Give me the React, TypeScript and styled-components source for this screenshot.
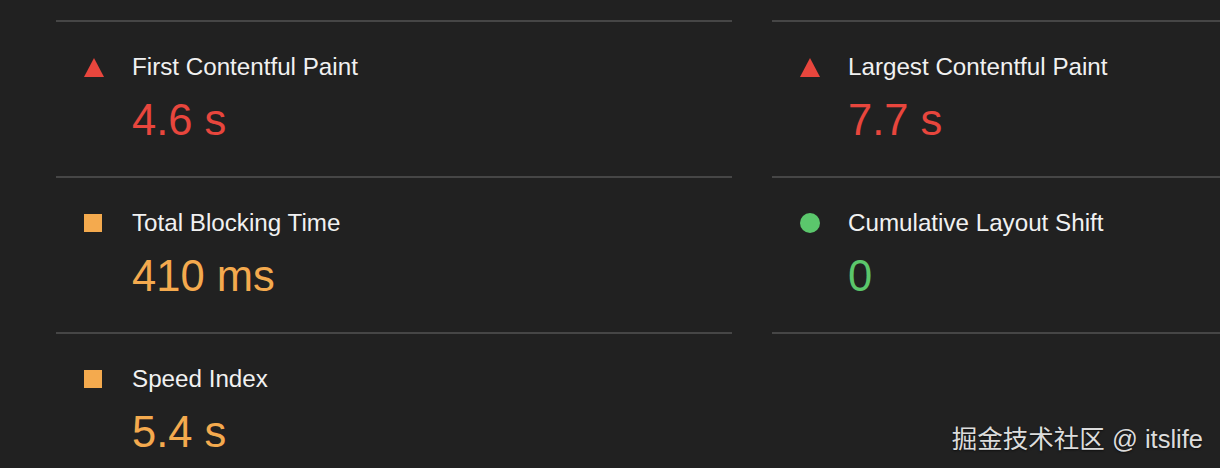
import React from 'react';
import styled, { createGlobalStyle } from 'styled-components';

const GlobalStyle = createGlobalStyle`
  html, body {
    margin: 0;
    padding: 0;
    background: #212121;
    overflow: hidden;
  }
`;

type Level = 'fail' | 'average' | 'pass';

const levelColor: Record<Level, string> = {
  fail: '#e8463d',
  average: '#f4aa4e',
  pass: '#5bc76c',
};

const Page = styled.div`
  position: relative;
  width: 1220px;
  height: 468px;
  box-sizing: border-box;
  padding: 20px 0 0 56px;
  background: #212121;
  font-family: 'Liberation Sans', Arial, Helvetica, sans-serif;
  overflow: hidden;
`;

const Grid = styled.div`
  display: grid;
  grid-template-columns: 676px 448px;
  column-gap: 40px;
  align-items: start;
`;

const Column = styled.div<{ $closed?: boolean }>`
  display: flex;
  flex-direction: column;
  border-bottom: ${p => (p.$closed ? '2px solid #464646' : 'none')};
`;

const Metric = styled.div`
  display: grid;
  grid-template-columns: 48px 1fr;
  grid-template-rows: 28px 50px;
  row-gap: 14px;
  height: 156px;
  box-sizing: border-box;
  padding: 31px 0 0 28px;
  border-top: 2px solid #464646;
`;

const IconCell = styled.div`
  display: flex;
  align-items: center;
`;

const Square = styled.div<{ $level: Level }>`
  width: 18px;
  height: 18px;
  background: ${p => levelColor[p.$level]};
`;

const Circle = styled.div<{ $level: Level }>`
  width: 20px;
  height: 20px;
  border-radius: 50%;
  background: ${p => levelColor[p.$level]};
`;

const Label = styled.div`
  font-size: 24.2px;
  line-height: 28px;
  color: #f1f1f1;
  white-space: nowrap;
`;

const Value = styled.div<{ $level: Level }>`
  grid-column: 2;
  font-size: 43.5px;
  line-height: 50px;
  color: ${p => levelColor[p.$level]};
  white-space: nowrap;
`;

const Watermark = styled.div`
  position: absolute;
  right: 17px;
  bottom: 14px;
  font-family: 'Liberation Sans', 'Noto Sans CJK SC', sans-serif;
  font-size: 25.5px;
  line-height: 30px;
  color: #dcdcdc;
  text-shadow: 0 1px 2px rgba(0, 0, 0, 0.6);
  white-space: nowrap;
`;

const Icon: React.FC<{ level: Level }> = ({ level }) => {
  if (level === 'fail') {
    return (
      <svg width="20" height="19" viewBox="0 0 20 19">
        <polygon points="10,0 20,19 0,19" fill={levelColor.fail} />
      </svg>
    );
  }
  if (level === 'average') return <Square $level={level} />;
  return <Circle $level={level} />;
};

type MetricData = { label: string; value: string; level: Level };

const left: MetricData[] = [
  { label: 'First Contentful Paint', value: '4.6 s', level: 'fail' },
  { label: 'Total Blocking Time', value: '410 ms', level: 'average' },
  { label: 'Speed Index', value: '5.4 s', level: 'average' },
];

const right: MetricData[] = [
  { label: 'Largest Contentful Paint', value: '7.7 s', level: 'fail' },
  { label: 'Cumulative Layout Shift', value: '0', level: 'pass' },
];

const MetricRow: React.FC<{ m: MetricData }> = ({ m }) => (
  <Metric>
    <IconCell>
      <Icon level={m.level} />
    </IconCell>
    <Label>{m.label}</Label>
    <Value $level={m.level}>{m.value}</Value>
  </Metric>
);

const App: React.FC = () => (
  <Page>
    <GlobalStyle />
    <Grid>
      <Column>
        {left.map(m => <MetricRow key={m.label} m={m} />)}
      </Column>
      <Column $closed>
        {right.map(m => <MetricRow key={m.label} m={m} />)}
      </Column>
    </Grid>
    <Watermark>掘金技术社区 @ itslife</Watermark>
  </Page>
);

export default App;
